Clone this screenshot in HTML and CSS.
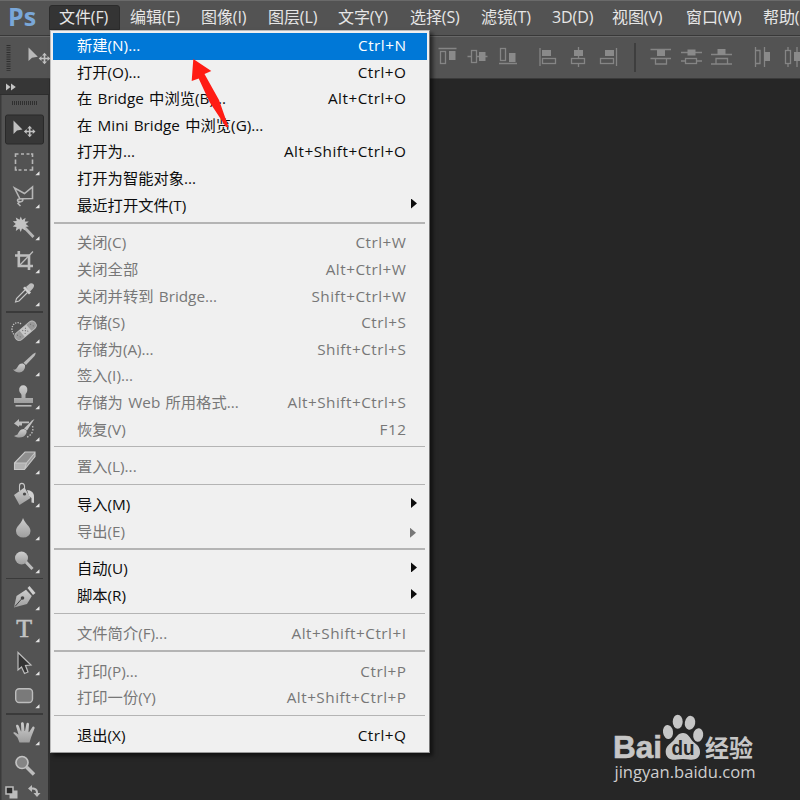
FILE: index.html
```html
<!DOCTYPE html>
<html lang="zh-CN">
<head>
<meta charset="utf-8">
<title>Ps</title>
<link rel="stylesheet" href="styles.css">
</head>
<body>
<div class="app">
  <header class="menubar">
    <span class="logo">Ps</span>
    <nav class="menus">
      <span class="tab active">文件(F)</span><span class="tab">编辑(E)</span><span class="tab">图像(I)</span><span class="tab">图层(L)</span><span class="tab">文字(Y)</span><span class="tab">选择(S)</span><span class="tab">滤镜(T)</span><span class="tab">3D(D)</span><span class="tab">视图(V)</span><span class="tab">窗口(W)</span><span class="tab">帮助(H)</span>
    </nav>
  </header>

  <div class="options">
    <svg class="grip-tool" width="50" height="41" viewBox="0 37 50 41">
      <path d="M8.5 45V71" stroke="#2e2e2e" stroke-width="4" stroke-dasharray="1 1.3"/>
      <path d="M28.500 47.500V61L32 57.800L37.800 56.800Z" fill="#b9b9b9"/>
      <use href="#cross" x="44.5" y="58.500"/>
    </svg>
    <svg class="align-a" width="90" height="41" viewBox="432 37 90 41">
      <g class="ln"><path d="M438.500 48.500H456.500M467.500 56.500H471M477 56.500H487.500M499 63.500H517"/><rect x="440.500" y="51.500" width="5" height="12"/><rect x="471.500" y="50.500" width="5" height="12"/><rect x="500.500" y="48.500" width="5" height="12"/></g>
      <g class="fl"><rect x="449" y="51" width="6.500" height="9"/><rect x="479" y="52" width="6.500" height="9"/><rect x="509" y="53" width="6.500" height="9"/></g>
    </svg>
    <svg class="align-b" width="90" height="41" viewBox="534 37 90 41">
      <g class="ln"><path d="M540 48V66M578.500 47V58M578.500 64V67M616.500 48V66"/><rect x="542.500" y="58.500" width="13" height="5"/><rect x="571.500" y="58.500" width="13" height="5"/><rect x="600.500" y="58.500" width="13" height="5"/></g>
      <g class="fl"><rect x="542" y="50" width="9" height="6"/><rect x="574" y="50" width="9" height="6"/><rect x="605" y="50" width="9" height="6"/></g>
    </svg>
    <i class="divider"></i>
    <svg class="align-c" width="90" height="41" viewBox="646 37 90 41">
      <g class="ln"><path d="M650.500 49.500H671M650.500 58.500H671M681 52.500H702M681 61H685M697 61H702M711 54.500H732M711 64H732"/><path d="M655.500 59V64H666.500V59"/><rect x="685.500" y="58.500" width="11" height="5"/><path d="M716 64V58.500H727.500V64"/></g>
      <g class="fl"><rect x="657" y="50" width="8" height="6"/><rect x="687.500" y="49.500" width="8" height="6"/><rect x="717.500" y="49" width="8" height="6"/></g>
    </svg>
    <svg class="align-d" width="50" height="41" viewBox="750 37 50 41">
      <g class="ln"><path d="M755.500 47V67M764.500 47V67M788 47V50M788 64V67M797 47V67"/><path d="M755.500 50.500H760V63.500H755.500"/><rect x="785.500" y="50.500" width="5" height="13"/></g>
      <g class="fl"><rect x="764" y="52" width="6" height="9"/><rect x="794" y="52" width="6" height="9"/></g>
    </svg>
  </div>

  <main class="work">
    <aside class="toolbox">
      <div class="collapse"><svg width="12" height="8" viewBox="0 0 12 8"><path d="M0 .5L4.500 4L0 7.500ZM5 .5L9.800 4L5 7.500Z" fill="#c4c4c4"/></svg></div>
      <div class="grip"></div>
      <div class="tools">
        <svg class="tool" viewBox="0 0 48 32.8">
          <defs>
            <linearGradient id="metal" x1="0" y1="0" x2="0" y2="1"><stop offset="0" stop-color="#cecece"/><stop offset="1" stop-color="#9e9e9e"/></linearGradient>
            <path id="cross" d="M-5.800 0L-3 -2.500V-.8H-.8V-3H-2.500L0 -5.800L2.500 -3H.8V-.8H3V-2.500L5.800 0L3 2.500V.8H.8V3H2.500L0 5.800L-2.500 3H-.8V.8H-3V2.500Z" fill="#c0c0c0"/>
            <path id="more" d="M39.500 25.200V29.200H35.300Z" fill="#e4e4e4"/>
          </defs>
          <rect x="5.500" y="2" width="38" height="29" rx="2" fill="#373737" stroke="#292929"/>
          <path d="M13.500 7.500V21L17 17.500L22.500 16.500Z" fill="#c0c0c0"/><use href="#cross" x="29.700" y="18.500"/>
        </svg>
        <svg class="tool" viewBox="0 0 48 32.8"><g class="st"><path d="M15.500 11V8H18.500M21 8H24M26.500 8H29.500M32.500 11V8H31M32.500 13.500V18M32.500 20.500V24H29.500M27 24H24M21.500 24H18.500M15.500 20.500V24H17M15.500 18V13.500"/></g><use href="#more"/></svg>
        <svg class="tool" viewBox="0 0 48 32.8"><g class="st"><path d="M20 20L14.500 9L24.500 14.500L32.500 8V19.500L22 19.800M20 20C17 19.500 16.500 23 20 23C24 22.500 23.500 19 20 20ZM20 22L18 24.500L20.500 27"/></g><use href="#more"/></svg>
        <svg class="tool" viewBox="0 0 48 32.8"><path d="M24 16L33.500 26" stroke="#b5b5b5" stroke-width="2.800"/><path d="M20.800 5.500L22.200 9L25.600 6.800L24.800 10.500L28.800 10.500L25.800 13L28.800 15.500L25 16L25.400 19.500L22 17.500L20.800 21L19.200 17.500L15.800 20L16.500 16L12.800 15.600L15.800 13L12.800 10.300L16.700 10L15.800 6.500L19.500 8.800Z" fill="#c3c3c3"/><use href="#more"/></svg>
        <svg class="tool" viewBox="0 0 48 32.8"><path d="M18.800 7V22H33M15 11.500H29V26" fill="none" stroke="#bdbdbd" stroke-width="2.600"/><path d="M19.500 21.500L33 7.500" stroke="#bdbdbd" stroke-width="1.300"/><use href="#more"/></svg>
        <svg class="tool" viewBox="0 0 48 32.8"><path d="M25 13L16.500 21.500L15.500 25L19 24L27.500 15.500" class="st1"/><path d="M23 11L25 9.500L31 15.500L29 17.500Z" fill="#d0d0d0"/><path d="M26 10L30 6.500Q33 5.500 34 8Q34.500 10 31.500 13L29.500 15Z" fill="#bdbdbd"/><use href="#more"/></svg>
        <i class="rule"></i>
        <svg class="tool" viewBox="0 0 48 32.8"><path d="M21 10C18 7 12 9 12 15C12 18 13 20 15 21" fill="none" stroke="#c4c4c4" stroke-width="1.300" stroke-dasharray="1.300 1.200"/><g transform="rotate(-40 25.500 16.700)"><rect x="13" y="12.600" width="25" height="8.400" rx="3.800" fill="#9a9a9a" stroke="#bababa"/><rect x="21" y="12.600" width="9" height="8.400" fill="#c6c6c6"/><path d="M23 14.800H24M26.500 14.800H27.500M23 18.500H24M26.500 18.500H27.500M24.800 16.600H26M16 15H17M17 18H18M33 15H34M34 18H35" stroke="#686868"/></g><use href="#more"/></svg>
        <svg class="tool" viewBox="0 0 48 32.8"><path d="M35.500 5.500Q36 6.500 34.500 9L26 18L23.500 15.800L33 7Z" fill="#b9b9b9"/><path d="M23 16.500C20 16 18.500 18 17.500 20C16.500 22 15 23 13 22.500C16 26 21 26.500 23.500 23.500C25.500 21 25 19 25 18Z" fill="url(#metal)"/><use href="#more"/></svg>
        <svg class="tool" viewBox="0 0 48 32.8"><path d="M19.200 10A4.100 4.100 0 1 1 27.300 10C27.300 13 25.500 13 25.500 15.500V18H33V23H14V18H21.500V15.500C21.500 13 19.200 13 19.200 10Z" fill="url(#metal)"/><path d="M15.500 25.800H31.500" stroke="#bdbdbd" stroke-width="1.500"/><use href="#more"/></svg>
        <svg class="tool" viewBox="0 0 48 32.8"><path d="M14 11.500L19 7V9.500H29V11.300H22V13.500H19V15Z" fill="#bdbdbd"/><path d="M34.500 7L27 18.500L24 16.500L32 8.500Z" fill="#c2c2c2"/><path d="M24 17C20 17 19 20 17.500 22.500L14 24C19 27 24 25.500 26 22Q27 20 26.500 18.500Z" fill="url(#metal)"/><path d="M32.500 14C34 19 31 24 26 25.500" fill="none" stroke="#bbb" stroke-width="1.400" stroke-dasharray="1.500 1.500"/><use href="#more"/></svg>
        <svg class="tool" viewBox="0 0 48 32.8"><path d="M14.500 18L25 7H35L26.500 18Z" fill="#8f8f8f"/><path d="M14.500 18H26.500L24.500 24.500H14.500Z" fill="#b2b2b2"/><path d="M26.500 18L35 7.500V11.500L24.500 24.500Z" fill="#9c9c9c"/><path d="M14.500 18L25 7H35V11.500L24.500 24.500H14.500ZM14.500 18H26.500L35 7.500M26.500 18L24.500 24.500" class="st1"/><use href="#more"/></svg>
        <svg class="tool" viewBox="0 0 48 32.8"><path d="M14 17L24.500 9.500L30.500 20L19.500 27Z" fill="url(#metal)"/><path d="M19.500 13V8C19.500 4.500 24 4.500 24.500 8V15" class="st1"/><circle cx="24.500" cy="16" r="1.600" fill="#484848"/><path d="M27 12C31 12 34.500 15 34 19V25L31.500 24.500V20L29 18Z" fill="#d0d0d0"/><use href="#more"/></svg>
        <svg class="tool" viewBox="0 0 48 32.8"><path d="M23 7C25 13 30.500 15 30.500 20A7.200 6.500 0 0 1 16 20C16 15 21.500 13 23 7Z" fill="url(#metal)"/><use href="#more"/></svg>
        <svg class="tool" viewBox="0 0 48 32.8"><path d="M25 17L32.500 25" stroke="#bcbcbc" stroke-width="3"/><circle cx="21.500" cy="14" r="6.500" fill="url(#metal)"/><use href="#more"/></svg>
        <i class="rule"></i>
        <svg class="tool" viewBox="0 0 48 32.8"><path d="M27.500 7L29.500 5L35.500 12L33 14Z" fill="#cfcfcf"/><path d="M14 26.500L16.500 15L26 8.800L31.800 15L27 23Z" fill="url(#metal)"/><path d="M15 25.500L22 17.500" stroke="#444" stroke-width="1"/><circle cx="22.500" cy="17" r="1.800" fill="#444"/><use href="#more"/></svg>
        <svg class="tool" viewBox="0 0 48 32.8"><text class="type" x="24.200" y="24.500">T</text><use href="#more"/></svg>
        <svg class="tool" viewBox="0 0 48 32.8"><path d="M18 6.500V24L21.500 21L24.500 27.500L28 26L25.500 19.500L31 19Z" fill="#333" stroke="#bdbdbd" stroke-width="1.200"/><use href="#more"/></svg>
        <svg class="tool" viewBox="0 0 48 32.8"><rect x="15.700" y="9.700" width="16.800" height="13.800" rx="3.500" fill="#7a7a7a" stroke="#bdbdbd" stroke-width="1.400"/><use href="#more"/></svg>
        <i class="rule"></i>
        <svg class="tool" viewBox="0 0 48 32.8"><path d="M19.500 26.500L17.500 21.500L13.200 17C13.500 15.500 15.500 16 17.500 18L18.500 18.500L16 10C16 8.500 18 8 18.800 10L21 15.500L21.300 15.300L21 7.500C21.300 6 23.500 6 23.800 7.500L24.500 15L25 15L26.500 7.500C27 6.200 29 6.500 29 8.200L28.500 16L29 16.300L32.500 11C33.500 10 35 11 34.500 12.500L31 21.500L29.500 26.500Z" fill="url(#metal)"/><use href="#more"/></svg>
        <svg class="tool" viewBox="0 0 48 32.8"><path d="M26.500 18L34 25.500" stroke="#bcbcbc" stroke-width="3.500"/><circle cx="22" cy="13.500" r="6" fill="#858585" stroke="#c2c2c2" stroke-width="1.700"/></svg>
      </div>
      <svg class="colors" width="48" height="18" viewBox="0 782 48 18"><rect x="9.500" y="790.500" width="8" height="8" fill="#bdbdbd"/><rect x="6" y="787" width="7" height="7" fill="#2b2b2b" stroke="#bdbdbd" stroke-width="1.500"/><path d="M28 788.500L32 785V787.500C36 787.500 38 789 38 793H40.500L37 797L33.500 793H36C36 790.500 35 789.500 32 789.500V792Z" fill="#bdbdbd"/></svg>
    </aside>
    <section class="canvas"></section>
  </main>

  <div class="dropdown">
    <div class="row selected"><span>新建(N)...</span><kbd>Ctrl+N</kbd></div>
    <div class="row"><span>打开(O)...</span><kbd>Ctrl+O</kbd></div>
    <div class="row"><span>在 Bridge 中浏览(B)...</span><kbd>Alt+Ctrl+O</kbd></div>
    <div class="row"><span>在 Mini Bridge 中浏览(G)...</span></div>
    <div class="row"><span>打开为...</span><kbd>Alt+Shift+Ctrl+O</kbd></div>
    <div class="row"><span>打开为智能对象...</span></div>
    <div class="row"><span>最近打开文件(T)</span><i class="sub"></i></div>
    <hr>
    <div class="row off"><span>关闭(C)</span><kbd>Ctrl+W</kbd></div>
    <div class="row off"><span>关闭全部</span><kbd>Alt+Ctrl+W</kbd></div>
    <div class="row off"><span>关闭并转到 Bridge...</span><kbd>Shift+Ctrl+W</kbd></div>
    <div class="row off"><span>存储(S)</span><kbd>Ctrl+S</kbd></div>
    <div class="row off"><span>存储为(A)...</span><kbd>Shift+Ctrl+S</kbd></div>
    <div class="row off"><span>签入(I)...</span></div>
    <div class="row off"><span>存储为 Web 所用格式...</span><kbd>Alt+Shift+Ctrl+S</kbd></div>
    <div class="row off"><span>恢复(V)</span><kbd>F12</kbd></div>
    <hr>
    <div class="row off"><span>置入(L)...</span></div>
    <hr>
    <div class="row"><span>导入(M)</span><i class="sub"></i></div>
    <div class="row off"><span>导出(E)</span><i class="sub low"></i></div>
    <hr>
    <div class="row"><span>自动(U)</span><i class="sub"></i></div>
    <div class="row"><span>脚本(R)</span><i class="sub"></i></div>
    <hr>
    <div class="row off"><span>文件简介(F)...</span><kbd>Alt+Shift+Ctrl+I</kbd></div>
    <hr>
    <div class="row off"><span>打印(P)...</span><kbd>Ctrl+P</kbd></div>
    <div class="row off"><span>打印一份(Y)</span><kbd>Alt+Shift+Ctrl+P</kbd></div>
    <hr>
    <div class="row"><span>退出(X)</span><kbd>Ctrl+Q</kbd></div>
  </div>

  <svg class="pointer" width="40" height="72" viewBox="190 58 40 72"><path d="M193.300 59L211.300 71L204.500 74L219 100L228.500 127H226L209.500 102L198.700 78.500L191.700 81Z" fill="#ff1c14"/></svg>

  <svg class="watermark" width="150" height="76" viewBox="610 710 150 76">
    <text class="bai" x="613" y="758" textLength="49" lengthAdjust="spacingAndGlyphs">Bai</text>
    <g fill="#c6c6c6">
      <ellipse cx="668" cy="732" rx="5" ry="7" transform="rotate(-8 668 732)"/>
      <ellipse cx="677.700" cy="721.800" rx="5" ry="7"/>
      <ellipse cx="690" cy="722.800" rx="5.200" ry="7" transform="rotate(10 690 722.800)"/>
      <ellipse cx="698.200" cy="735" rx="5" ry="6.800" transform="rotate(8 698.200 735)"/>
      <path d="M683 733C688 733 690 738 693 741.500C697 745 700.500 747 700 753C699.500 758 695 760.500 689 759.500Q683 758.500 677 759.500C671 760.500 666 758.500 665.700 752C665.500 746 670 744 673 741C676 737.500 678 733 683 733Z"/>
    </g>
    <text class="du" x="671.500" y="754.500" textLength="23" lengthAdjust="spacingAndGlyphs">du</text>
    <text class="exp" x="705" y="756.500" textLength="48" lengthAdjust="spacingAndGlyphs">经验</text>
    <text class="url" x="614.500" y="777.500" textLength="141" lengthAdjust="spacingAndGlyphs">jingyan.baidu.com</text>
  </svg>
</div>
</body>
</html>
```
FILE: styles.css
```css
* { box-sizing: border-box; }
body { margin: 0; background: #262626; }
svg { display: block; flex: none; }

.app {
  position: relative;
  display: flex;
  flex-direction: column;
  width: 800px;
  height: 800px;
  overflow: hidden;
  font-family: "Open Sans", "Noto Sans CJK SC", sans-serif;
  background: #262626;
}

/* menu bar */
.menubar {
  display: flex;
  height: 36px;
  flex: none;
  background: #535353;
  border-top: 1px solid #6a6a6a;
  border-bottom: 1px solid #383838;
  color: #e6e6e6;
}
.logo {
  flex: none;
  width: 49px;
  padding-left: 8px;
  font: bold 25px/31px "Open Sans", sans-serif;
  color: #7aa7d8;
}
.menus {
  display: grid;
  flex: none;
  grid-template-columns: 71px 71px 67px 70px 72px 71px 71px 60px 74px 77px 74px;
  height: 25px;
  margin-top: 4px;
}
.tab {
  padding-left: 10px;
  font-size: 16px;
  line-height: 24px;
  letter-spacing: -0.1px;
  white-space: nowrap;
}
.active { background: #343434; border: 1px solid #2b2b2b; border-radius: 3px 3px 0 0; padding-left: 9px; line-height: 22px; }

/* options bar */
.options {
  display: flex;
  flex: none;
  height: 43px;
  background: #535353;
  border-top: 1px solid #686868;
  border-bottom: 1px solid #3a3a3a;
}
.align-a { margin-left: 382px; }
.align-b { margin-left: 12px; }
.divider { width: 2px; height: 29px; margin: 6px 10px 0; background: #3e3e3e; }
.align-d { margin-left: 14px; }
.ln { fill: none; stroke: #858585; stroke-width: 1.3; }
.fl { fill: #8a8a8a; }

/* work area */
.work { display: flex; flex: 1; min-height: 0; }
.toolbox {
  width: 50px;
  background: #535353;
  box-shadow: inset 1.5px 0 #3a3a3a, inset -2px 0 #303030;
}
.collapse { height: 16px; padding: 4px 0 0 6px; background: #363636; border: 1px solid #2d2d2d; border-top: 0; border-left: 0; }
.grip { width: 25px; height: 4px; margin: 5.5px 0 0 12px; background: repeating-linear-gradient(90deg, #2f2f2f 0 1px, #535353 1px 2px); }
.tools { padding-top: 8.6px; }
.tool { width: 48px; height: 32.8px; }
.rule { display: block; width: 37px; height: 1.5px; margin: 1.2px 0 1.5px 6px; background: #3a3a3a; }
.canvas { flex: 1; background: #262626; }
.st { fill: none; stroke: #b6b6b6; stroke-width: 1.6; }
.st1 { fill: none; stroke: #c8c8c8; stroke-width: 1.1; }
.type { font: 26px "Liberation Serif", serif; fill: #c2c2c2; stroke: #c2c2c2; stroke-width: .6; text-anchor: middle; }

/* file menu */
.dropdown {
  position: absolute;
  left: 50px;
  top: 30px;
  width: 380px;
  height: 723px;
  padding: 2px;
  background: #f0f0f0;
  border: 1px solid #bcbcbc;
  border-right-color: #777;
  border-bottom-color: #999;
  box-shadow: 3px 3px 4px rgba(0, 0, 0, .55);
}
.row {
  display: flex;
  height: 26.6px;
  padding: 0 20.5px 0 24px;
  font-size: 15.3px;
  line-height: 25.8px;
  word-spacing: 1.3px;
  color: #0c0c0c;
  white-space: nowrap;
}
.row kbd { margin-left: auto; font: inherit; letter-spacing: .5px; }
.row.selected { background: #0078d7; color: #fff; }
.row.off { color: #777; }
.sub {
  width: 6px;
  height: 10px;
  margin: 6px -10.5px 0 auto;
  background: currentColor;
  clip-path: polygon(0 0, 100% 50%, 0 100%);
}
.sub.low { margin-top: 9px; margin-right: -9.5px; }
.dropdown hr { height: 1.4px; margin: 3px 2px 6.8px 1px; border: 0; background: #b4b4b4; }

.pointer { position: absolute; left: 190px; top: 58px; }

/* watermark */
.watermark { position: absolute; left: 610px; top: 710px; }
.bai { font: bold 31px "Liberation Sans", sans-serif; fill: #c6c6c6; stroke: #c6c6c6; stroke-width: .6; }
.du { font: bold 20px "Liberation Sans", sans-serif; fill: #262626; }
.exp { font: bold 24px "Noto Sans CJK SC", sans-serif; fill: #c6c6c6; }
.url { font: 16.5px "Open Sans", sans-serif; fill: #cecece; }
```
